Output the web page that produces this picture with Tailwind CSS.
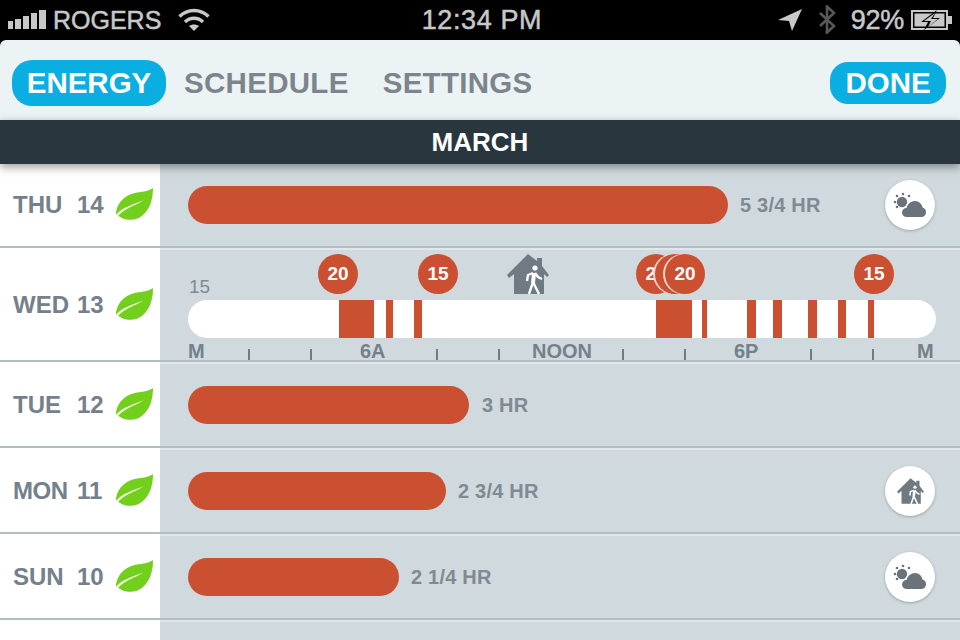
<!DOCTYPE html>
<html lang="en">
<head>
    <meta charset="UTF-8">
    <title>Energy history</title>
    <script src="https://cdn.jsdelivr.net/npm/@tailwindcss/browser@4"></script>
</head>
<body class="bg-black">
<svg class="hidden" width="0" height="0">
    <symbol id="leaf" viewBox="0 0 37 33">
        <path fill="#72cf1c" d="M37 0C31 5 19 3 11 8 4 12 0 20 0 26c6 6 18 9 27 1 7-6 10-16 10-27z"/>
        <path fill="#f2fbe6" d="M0 27c6-8 17-10 28-15-9 6-19 8-26 16z"/>
    </symbol>
    <symbol id="house" viewBox="0 0 42 40">
        <path fill="#6f7a82" d="M21 0l9 7V4h5v8l7 9-2 2-3-3v20H7V20l-5 4-2-3z"/>
        <circle cx="28" cy="14" r="2.6" fill="#fff"/>
        <path fill="none" stroke="#fff" stroke-width="4" d="M27 19l-1 10"/>
        <path fill="none" stroke="#fff" stroke-width="2.4" d="M26 28l-4 12M26 28l6 12M26 19l-5 2-1 6M28 19l3 4 4 2"/>
    </symbol>
    <symbol id="weather" viewBox="0 0 50 50">
        <circle cx="17" cy="22" r="5.200" fill="#6a737a"/>
        <g fill="#6a737a">
            <circle cx="18" cy="14" r="1.300"/><circle cx="12" cy="16" r="1.300"/><circle cx="24" cy="16" r="1.300"/>
            <circle cx="10" cy="22" r="1.300"/><circle cx="12" cy="27" r="1.300"/>
        </g>
        <path fill="#fff" d="M22 38.500c-4 0-6.500-2.500-6.500-6s3-5.500 5-6C22 22.500 26 19.500 30 19.500c4.500 0 8 3 9 6.500 2.500.5 3.500 3 3.500 6 0 4-3 6.500-6.500 6.500z"/>
        <path fill="#6a737a" d="M22 37c-3 0-5-2-5-4.500 0-2.500 2-4.500 4.500-4.500C22.500 24 26 21 30 21c4 0 7 3 7.500 6.500C40 28 41 30 41 32c0 3-2 5-5 5z"/>
    </symbol>
</svg>

<div class="relative w-[960px] h-[640px] overflow-hidden bg-black font-['Liberation_Sans',sans-serif]">
    <!-- status bar -->
    <div class="flex items-center h-10 pl-2 pr-[7px] text-[#c8c8c8] text-[27px] leading-none [-webkit-text-stroke:0.5px_#c8c8c8]">
        <svg width="39" height="20" viewBox="0 0 39 20" class="mb-px" fill="#c8c8c8">
            <rect x="0" y="11" width="5" height="8"/>
            <rect x="7" y="9" width="6" height="10"/>
            <rect x="15" y="6" width="6" height="13"/>
            <rect x="23" y="3" width="6" height="16"/>
            <rect x="31" y="0" width="7" height="19"/>
        </svg>
        <span class="ml-[6px] w-[125px] text-[25px]">ROGERS</span>
        <svg width="32" height="23" viewBox="0 0 32 23" fill="none" stroke="#c8c8c8" stroke-width="3.4" class="mb-[2px]">
            <path d="M1.5 8.5c8-8 21-8 29 0"/>
            <path d="M7 14c5-5 13-5 18 0"/>
            <path d="M16 23l-5-5c3-2 7-2 10 0z" fill="#c8c8c8" stroke="none"/>
        </svg>
        <span class="flex-1 text-center pr-[24px] tracking-[0.6px]">12:34 PM</span>
        <svg width="24" height="22" viewBox="0 0 24 22" fill="#c8c8c8" class="mb-px">
            <path d="M24 0L14 22l-3-10L0 11z"/>
        </svg>
        <svg width="18" height="29" viewBox="0 0 18 29" fill="none" stroke="#585858" stroke-width="2.6" class="ml-[16px] mb-px">
            <path d="M2 8l14 13-7 6.500V1.500l7 6.500L2 21"/>
        </svg>
        <span class="ml-[15px] tracking-[-0.3px]">92%</span>
        <svg width="42" height="20" viewBox="0 0 42 20" class="ml-[7px] mb-px">
            <rect x="1" y="1" width="35" height="18" fill="none" stroke="#c8c8c8" stroke-width="2"/>
            <rect x="3.500" y="3.500" width="30" height="13" fill="#c8c8c8"/>
            <rect x="37" y="6" width="4" height="8" fill="#c8c8c8"/>
            <path d="M26 0L10 12h7l-4 8 16-12h-7z" fill="#000"/>
            <path d="M24 3L13 11h7l-3 6 10-8h-7z" fill="#c8c8c8"/>
        </svg>
    </div>

    <!-- nav -->
    <div class="flex items-center h-20 pt-[6px] pl-3 pr-[14px] bg-[#ecf3f4] rounded-t-[6px] text-[29.500px] font-bold leading-none text-[#7c858c]">
        <span class="flex items-center justify-center w-[154px] h-[46px] rounded-[20px] bg-[#0aaee0] text-white">ENERGY</span>
        <span class="ml-[18px] tracking-[0.3px]">SCHEDULE</span>
        <span class="ml-[34px] tracking-[0.3px]">SETTINGS</span>
        <span class="flex items-center justify-center ml-auto w-[116px] h-[42px] rounded-[18px] bg-[#0aaee0] text-white">DONE</span>
    </div>

    <!-- month -->
    <div class="relative z-10 flex items-center justify-center h-11 bg-[#29363e] text-white text-[26px] font-bold shadow-[0_3px_9px_rgba(0,0,0,0.4)]">MARCH</div>

    <!-- THU 14 -->
    <div class="flex h-[84px] border-b-2 border-[#b0bfbf]">
        <div class="flex items-center w-[160px] pl-[13px] bg-white text-[#74808a] text-[24px] font-bold leading-none">
            <span class="w-[64px]">THU</span><span class="w-[39px]">14</span>
            <svg width="37" height="33" class="mb-[2px]"><use href="#leaf"/></svg>
        </div>
        <div class="flex flex-1 items-start pt-[22px] pl-7 bg-[#cfd9de]">
            <div class="w-[540px] h-[38px] rounded-full bg-[#cb4f31]"></div>
            <span class="ml-3 text-[20px] tracking-[0.2px] leading-[38px] font-bold text-[#7f8a92]">5 3/4 HR</span>
            <div class="flex ml-auto mr-[25px] mt-[-6px] w-[50px] h-[50px] rounded-full bg-white shadow-[0_1px_3px_rgba(0,0,0,0.25)]">
                <svg width="50" height="50"><use href="#weather"/></svg>
            </div>
        </div>
    </div>

    <!-- WED 13 -->
    <div class="flex h-[114px] border-b-2 border-[#b0bfbf]">
        <div class="flex items-center w-[160px] pl-[13px] bg-white text-[#74808a] text-[24px] font-bold leading-none">
            <span class="w-[64px] mt-[2px]">WED</span><span class="w-[39px] mt-[2px]">13</span>
            <svg width="37" height="33"><use href="#leaf"/></svg>
        </div>
        <div class="relative flex-1 border-t-2 border-[#dfe7ea] bg-[#cfd9de]">
            <span class="absolute left-[29px] top-[27px] text-[19px] leading-none text-[#7f8a92]">15</span>

            <div class="absolute left-[158px] top-[4px] flex items-center justify-center w-10 h-10 rounded-full bg-[#cb4f31] text-white text-[19px] font-bold">20</div>
            <div class="absolute left-[258px] top-[4px] flex items-center justify-center w-10 h-10 rounded-full bg-[#cb4f31] text-white text-[19px] font-bold">15</div>
            <svg class="absolute left-[347px] top-[4px]" width="42" height="40"><use href="#house"/></svg>
            <div class="absolute left-[476px] top-[4px] flex items-center justify-center w-10 h-10 rounded-full bg-[#cb4f31] text-white text-[19px] font-bold">20</div>
            <div class="absolute left-[495px] top-[4px] w-10 h-10 rounded-full bg-[#cb4f31] shadow-[-2px_0_0_#f0d8cc]"></div>
            <div class="absolute left-[505px] top-[4px] flex items-center justify-center w-10 h-10 rounded-full bg-[#cb4f31] text-white text-[19px] font-bold shadow-[-2px_0_0_#f0d8cc]">20</div>
            <div class="absolute left-[694px] top-[4px] flex items-center justify-center w-10 h-10 rounded-full bg-[#cb4f31] text-white text-[19px] font-bold">15</div>

            <div class="absolute left-7 top-[50px] w-[748px] h-[38px] rounded-full bg-white overflow-hidden">
                <div class="absolute top-0 h-full left-[151px] w-[35px] bg-[#cb4f31]"></div>
                <div class="absolute top-0 h-full left-[198px] w-[7px] bg-[#cb4f31]"></div>
                <div class="absolute top-0 h-full left-[226px] w-[8px] bg-[#cb4f31]"></div>
                <div class="absolute top-0 h-full left-[468px] w-[36px] bg-[#cb4f31]"></div>
                <div class="absolute top-0 h-full left-[514px] w-[5px] bg-[#cb4f31]"></div>
                <div class="absolute top-0 h-full left-[559px] w-[9px] bg-[#cb4f31]"></div>
                <div class="absolute top-0 h-full left-[585px] w-[9px] bg-[#cb4f31]"></div>
                <div class="absolute top-0 h-full left-[620px] w-[9px] bg-[#cb4f31]"></div>
                <div class="absolute top-0 h-full left-[650px] w-[8px] bg-[#cb4f31]"></div>
                <div class="absolute top-0 h-full left-[680px] w-[6px] bg-[#cb4f31]"></div>
            </div>

            <span class="absolute left-7 top-[91px] text-[20px] leading-none font-bold text-[#74808a]">M</span>
            <span class="absolute left-[200px] top-[91px] text-[20px] leading-none font-bold text-[#74808a]">6A</span>
            <span class="absolute left-[372px] top-[91px] text-[20px] leading-none font-bold text-[#74808a]">NOON</span>
            <span class="absolute left-[574px] top-[91px] text-[20px] leading-none font-bold text-[#74808a]">6P</span>
            <span class="absolute left-[757px] top-[91px] text-[20px] leading-none font-bold text-[#74808a]">M</span>

            <div class="absolute left-[88px] top-[99px] w-[1.5px] h-[11px] bg-[#6f7a82]"></div>
            <div class="absolute left-[150px] top-[99px] w-[1.5px] h-[11px] bg-[#6f7a82]"></div>
            <div class="absolute left-[276px] top-[99px] w-[1.5px] h-[11px] bg-[#6f7a82]"></div>
            <div class="absolute left-[338px] top-[99px] w-[1.5px] h-[11px] bg-[#6f7a82]"></div>
            <div class="absolute left-[462px] top-[99px] w-[1.5px] h-[11px] bg-[#6f7a82]"></div>
            <div class="absolute left-[524px] top-[99px] w-[1.5px] h-[11px] bg-[#6f7a82]"></div>
            <div class="absolute left-[650px] top-[99px] w-[1.5px] h-[11px] bg-[#6f7a82]"></div>
            <div class="absolute left-[712px] top-[99px] w-[1.5px] h-[11px] bg-[#6f7a82]"></div>
        </div>
    </div>

    <!-- TUE 12 -->
    <div class="flex h-[86px] border-b-2 border-[#b0bfbf]">
        <div class="flex items-center w-[160px] pl-[13px] bg-white text-[#74808a] text-[24px] font-bold leading-none">
            <span class="w-[64px] mt-[2px]">TUE</span><span class="w-[39px] mt-[2px]">12</span>
            <svg width="37" height="33"><use href="#leaf"/></svg>
        </div>
        <div class="flex flex-1 items-start pt-[22px] pl-7 border-t-2 border-[#dfe7ea] bg-[#cfd9de]">
            <div class="w-[281px] h-[38px] rounded-full bg-[#cb4f31]"></div>
            <span class="ml-[13px] text-[20px] tracking-[0.2px] leading-[38px] font-bold text-[#7f8a92]">3 HR</span>
        </div>
    </div>

    <!-- MON 11 -->
    <div class="flex h-[86px] border-b-2 border-[#b0bfbf]">
        <div class="flex items-center w-[160px] pl-[13px] bg-white text-[#74808a] text-[24px] font-bold leading-none">
            <span class="w-[64px] mt-[2px] tracking-[-0.5px]">MON</span><span class="w-[39px] mt-[2px]">11</span>
            <svg width="37" height="33"><use href="#leaf"/></svg>
        </div>
        <div class="flex flex-1 items-start pt-[22px] pl-7 border-t-2 border-[#dfe7ea] bg-[#cfd9de]">
            <div class="w-[258px] h-[38px] rounded-full bg-[#cb4f31]"></div>
            <span class="ml-3 text-[20px] tracking-[0.2px] leading-[38px] font-bold text-[#7f8a92]">2 3/4 HR</span>
            <div class="flex items-center justify-center ml-auto mr-[25px] mt-[-6px] w-[50px] h-[50px] rounded-full bg-white shadow-[0_1px_3px_rgba(0,0,0,0.25)]">
                <svg width="27" height="26"><use href="#house"/></svg>
            </div>
        </div>
    </div>

    <!-- SUN 10 -->
    <div class="flex h-[86px] border-b-2 border-[#b0bfbf]">
        <div class="flex items-center w-[160px] pl-[13px] bg-white text-[#74808a] text-[24px] font-bold leading-none">
            <span class="w-[64px] mt-[2px]">SUN</span><span class="w-[39px] mt-[2px]">10</span>
            <svg width="37" height="33"><use href="#leaf"/></svg>
        </div>
        <div class="flex flex-1 items-start pt-[22px] pl-7 border-t-2 border-[#dfe7ea] bg-[#cfd9de]">
            <div class="w-[211px] h-[38px] rounded-full bg-[#cb4f31]"></div>
            <span class="ml-3 text-[20px] tracking-[0.2px] leading-[38px] font-bold text-[#7f8a92]">2 1/4 HR</span>
            <div class="flex ml-auto mr-[25px] mt-[-6px] w-[50px] h-[50px] rounded-full bg-white shadow-[0_1px_3px_rgba(0,0,0,0.25)]">
                <svg width="50" height="50"><use href="#weather"/></svg>
            </div>
        </div>
    </div>

    <!-- next row, cut off -->
    <div class="flex h-5">
        <div class="w-[160px] bg-white"></div>
        <div class="flex-1 border-t-2 border-[#dfe7ea] bg-[#cfd9de]"></div>
    </div>
</div>
</body>
</html>
